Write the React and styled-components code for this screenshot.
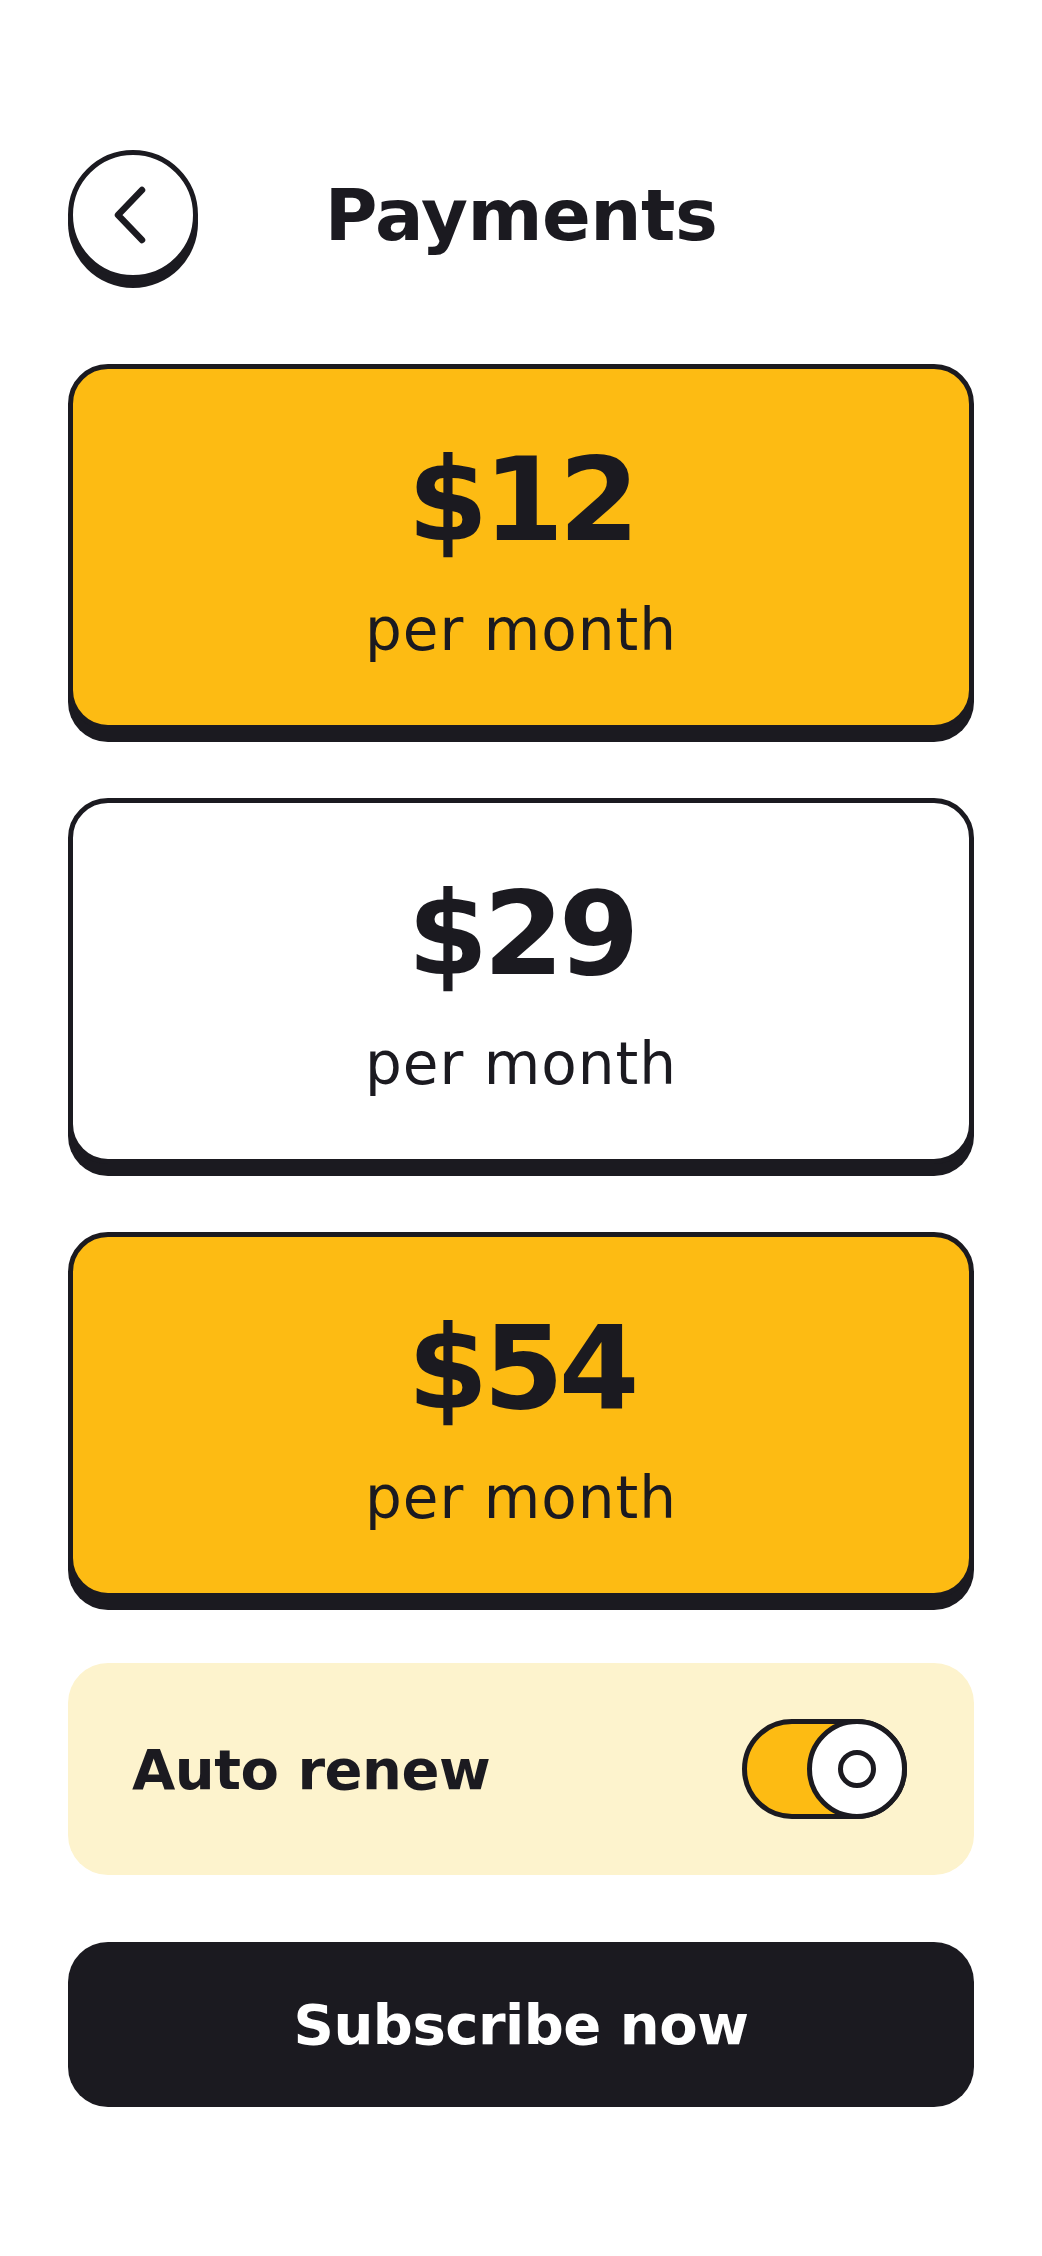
import React, { useState } from 'react';
import styled, { createGlobalStyle } from 'styled-components';

const ink = '#1b1a20';
const yellow = '#fdbb13';
const cream = '#fdf3cd';

const GlobalStyle = createGlobalStyle`
  body {
    margin: 0;
    background: #ffffff;
    font-family: "DejaVu Sans", "Liberation Sans", sans-serif;
    color: ${ink};
  }
`;

const Page = styled.div`
  width: 1042px;
  box-sizing: border-box;
  padding: 150px 68px 120px;
`;

const Header = styled.header`
  display: grid;
  grid-template-columns: 130px 1fr 130px;
  align-items: center;
  height: 130px;
`;

const BackButton = styled.button`
  width: 130px;
  height: 130px;
  box-sizing: border-box;
  border-radius: 50%;
  border: 5px solid ${ink};
  background: #ffffff;
  box-shadow: 0 8px 0 ${ink};
  display: flex;
  align-items: center;
  justify-content: center;
  padding: 0 8px 0 0;
  cursor: pointer;
`;

const Title = styled.h1`
  margin: 0;
  text-align: center;
  font-size: 72px;
  font-weight: 700;
  letter-spacing: -0.5px;
  line-height: 1;
`;

const PlanList = styled.div`
  display: flex;
  flex-direction: column;
  gap: 68px;
  margin-top: 84px;
`;

const PlanCard = styled.div`
  height: 366px;
  box-sizing: border-box;
  border: 5px solid ${ink};
  border-radius: 40px;
  background: ${(p) => (p.$highlight ? yellow : '#ffffff')};
  box-shadow: 0 12px 0 ${ink};
  display: flex;
  flex-direction: column;
  align-items: center;
  padding-top: 73px;
  cursor: pointer;
`;

const Price = styled.div`
  font-size: 116px;
  line-height: 116px;
  font-weight: 700;
  letter-spacing: -5px;
`;

const Period = styled.div`
  margin-top: 43px;
  font-size: 58px;
  line-height: 58px;
  font-weight: 400;
  letter-spacing: 1px;
`;

const RenewRow = styled.div`
  margin-top: 65px;
  height: 212px;
  border-radius: 40px;
  background: ${cream};
  display: flex;
  align-items: center;
  justify-content: space-between;
  padding: 0 67px 0 64px;
`;

const RenewLabel = styled.span`
  font-size: 56px;
  font-weight: 700;
  letter-spacing: -0.5px;
`;

const Toggle = styled.button`
  position: relative;
  width: 165px;
  height: 100px;
  box-sizing: border-box;
  border: 5px solid ${ink};
  border-radius: 50px;
  background: ${(p) => (p.$on ? yellow : '#ffffff')};
  padding: 0;
  cursor: pointer;
`;

const Knob = styled.span`
  position: absolute;
  top: -5px;
  ${(p) => (p.$on ? 'right: -5px;' : 'left: -5px;')}
  width: 100px;
  height: 100px;
  box-sizing: border-box;
  border-radius: 50%;
  border: 5px solid ${ink};
  background: #ffffff;
  display: flex;
  align-items: center;
  justify-content: center;
`;

const KnobDot = styled.span`
  width: 38px;
  height: 38px;
  box-sizing: border-box;
  border-radius: 50%;
  border: 5px solid ${ink};
`;

const SubscribeButton = styled.button`
  margin-top: 67px;
  width: 100%;
  height: 165px;
  border: none;
  border-radius: 40px;
  background: ${ink};
  color: #ffffff;
  font-family: "DejaVu Sans", "Liberation Sans", sans-serif;
  font-size: 56px;
  font-weight: 700;
  letter-spacing: -0.5px;
  cursor: pointer;
`;

const plans = [
  { price: '$12', highlight: true },
  { price: '$29', highlight: false },
  { price: '$54', highlight: true },
];

function ChevronLeft() {
  return (
    <svg width="36" height="58" viewBox="0 0 36 58" fill="none">
      <path
        d="M31 4 L7 29 L31 54"
        stroke={ink}
        strokeWidth="6.5"
        strokeLinecap="round"
        strokeLinejoin="round"
      />
    </svg>
  );
}

function App() {
  const [autoRenew, setAutoRenew] = useState(true);

  return (
    <>
      <GlobalStyle />
      <Page>
        <Header>
          <BackButton aria-label="Back">
            <ChevronLeft />
          </BackButton>
          <Title>Payments</Title>
        </Header>

        <PlanList>
          {plans.map((plan) => (
            <PlanCard key={plan.price} $highlight={plan.highlight}>
              <Price>{plan.price}</Price>
              <Period>per month</Period>
            </PlanCard>
          ))}
        </PlanList>

        <RenewRow>
          <RenewLabel>Auto renew</RenewLabel>
          <Toggle $on={autoRenew} onClick={() => setAutoRenew(!autoRenew)}>
            <Knob $on={autoRenew}>
              <KnobDot />
            </Knob>
          </Toggle>
        </RenewRow>

        <SubscribeButton>Subscribe now</SubscribeButton>
      </Page>
    </>
  );
}

export default App;
